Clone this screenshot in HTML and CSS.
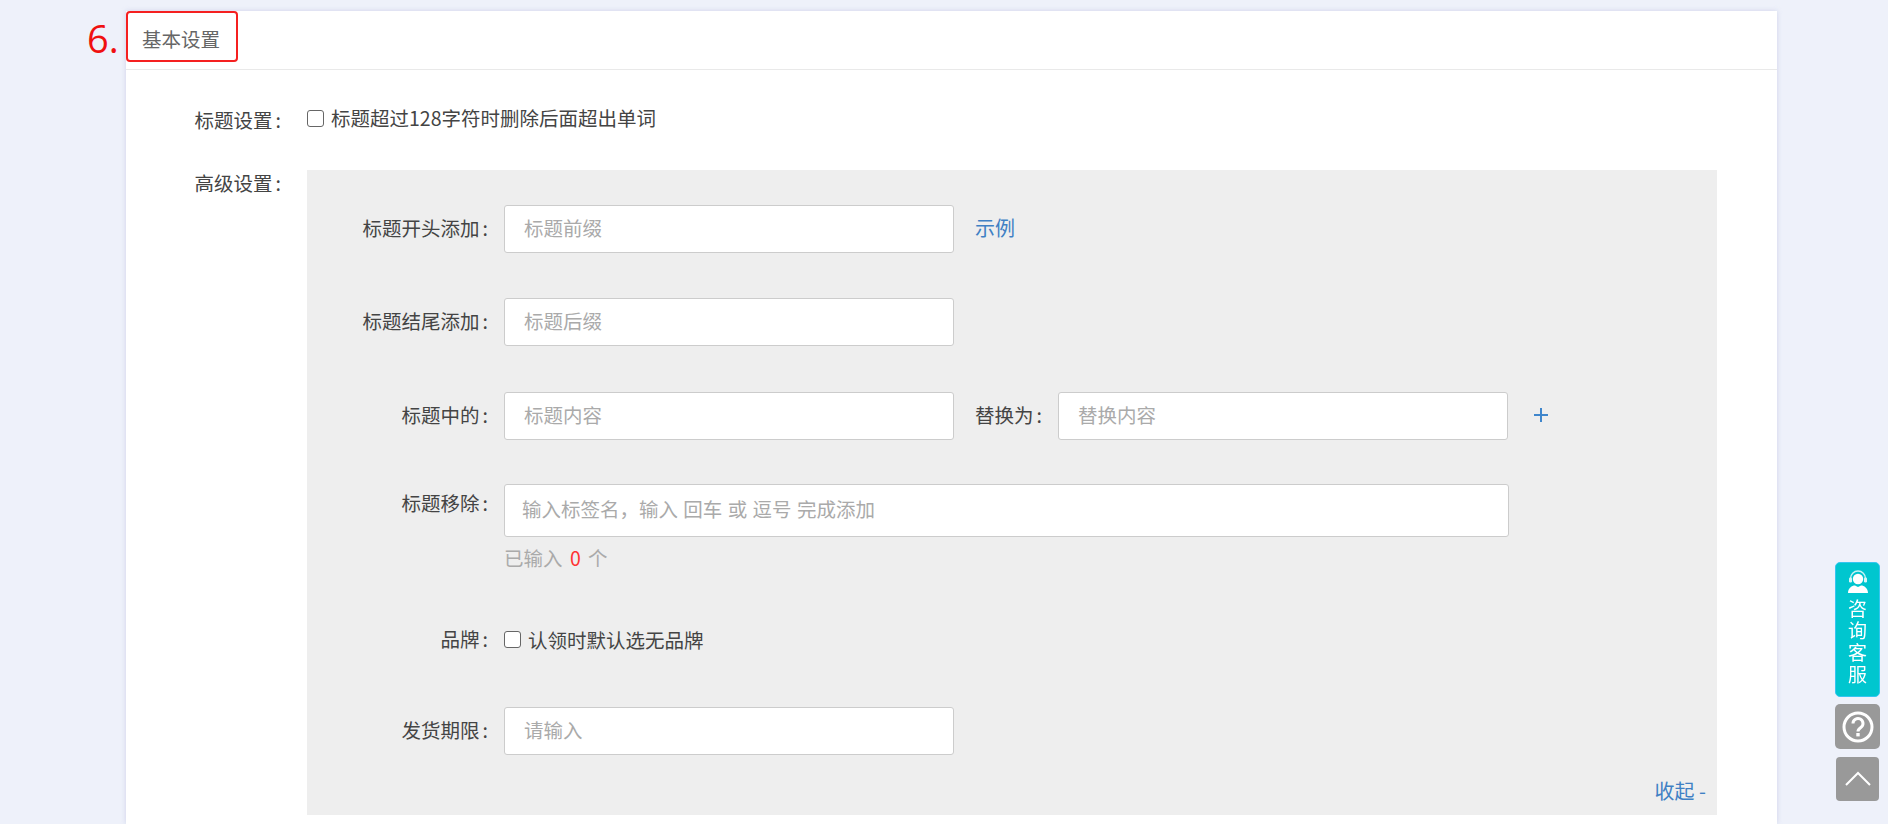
FILE: index.html
```html
<!DOCTYPE html>
<html lang="zh-CN">
<head>
<meta charset="utf-8">
<title>基本设置</title>
<link rel="stylesheet" href="styles.css">
</head>
<body>
<main class="card">
  <span class="step-no">6.</span>
  <header class="card-head"><h2 class="card-title">基本设置</h2><span class="mark"></span></header>
  <section class="card-body">
    <div class="row row-title">
      <label class="label">标题设置<span class="colon">:</span></label>
      <label class="check check-title"><span class="box"></span>标题超过128字符时删除后面超出单词</label>
    </div>
    <div class="row row-adv">
      <label class="label">高级设置<span class="colon">:</span></label>
      <div class="panel">
        <div class="p-row p-first">
          <label class="p-label">标题开头添加<span class="colon">:</span></label>
          <div class="input"><span class="ph">标题前缀</span></div>
          <a class="link demo">示例</a>
        </div>
        <div class="p-row p-second">
          <label class="p-label">标题结尾添加<span class="colon">:</span></label>
          <div class="input"><span class="ph">标题后缀</span></div>
        </div>
        <div class="p-row p-third">
          <label class="p-label">标题中的<span class="colon">:</span></label>
          <div class="input"><span class="ph">标题内容</span></div>
          <label class="mid-label">替换为<span class="colon">:</span></label>
          <div class="input"><span class="ph">替换内容</span></div>
          <svg class="plus" viewBox="0 0 16 16" width="16" height="16" aria-label="添加"><path d="M8 1v14M1 8h14" stroke="#3f86cc" stroke-width="2" fill="none"/></svg>
        </div>
        <div class="p-row p-tags">
          <label class="p-label">标题移除<span class="colon">:</span></label>
          <div class="tag-col">
            <div class="input input-wide"><span class="ph">输入标签名，输入 回车 或 逗号 完成添加</span></div>
            <p class="count">已输入 <em>0</em> 个</p>
          </div>
        </div>
        <div class="p-row p-brand">
          <label class="p-label">品牌<span class="colon">:</span></label>
          <label class="check check-brand"><span class="box"></span>认领时默认选无品牌</label>
        </div>
        <div class="p-row p-ship">
          <label class="p-label">发货期限<span class="colon">:</span></label>
          <div class="input"><span class="ph">请输入</span></div>
        </div>
        <div class="p-foot"><a class="link">收起 -</a></div>
      </div>
    </div>
  </section>
</main>
<aside class="side">
  <div class="side-chat">
    <svg viewBox="0 0 24 24" width="24" height="24"><path d="M4.5 10V8.5a7.5 7.5 0 0 1 15 0V10" fill="none" stroke="#c9f2f4" stroke-width="1.4"/><rect x="3" y="7.5" width="3" height="5" rx="1.2" fill="#d8f6f7"/><rect x="18" y="7.5" width="3" height="5" rx="1.2" fill="#d8f6f7"/><circle cx="12" cy="9" r="5.2" fill="#fff"/><path d="M2 23c0-5 4-7.500 7-7.500l3 1.500 3-1.500c3 0 7 2.500 7 7.500z" fill="#fff"/></svg>
    <span class="side-text">咨询客服</span>
  </div>
  <div class="side-help">
    <svg viewBox="0 0 32 32" width="32" height="32"><circle cx="16" cy="16" r="14" fill="none" stroke="#fff" stroke-width="3"/><path d="M11 12.500a5 5 0 1 1 7.800 4.100c-1.800 1.200-2.800 2-2.800 4" fill="none" stroke="#fff" stroke-width="3"/><rect x="14.300" y="22" width="3.400" height="3.400" fill="#fff"/></svg>
  </div>
  <div class="side-top">
    <svg viewBox="0 0 26 16" width="26" height="16"><path d="M1 14L13 2l12 12" fill="none" stroke="#fff" stroke-width="2"/></svg>
  </div>
</aside>
</body>
</html>
```
FILE: styles.css
```css
* { box-sizing: border-box; }
html, body { height: 100%; }
body {
  margin: 0;
  overflow: hidden;
  background: #eef1fa;
  font-family: "Noto Sans CJK SC", "Liberation Sans", sans-serif;
  font-size: 19.5px;
  color: #444;
  padding: 11px 111px 0 126px;
}
.card {
  position: relative;
  background: #fff;
  box-shadow: 0 0 5px rgba(170, 175, 215, .45);
  height: 813px;
}
.step-no {
  position: absolute;
  left: -39px;
  top: 2px;
  font-size: 38px;
  line-height: 50px;
  color: #f01010;
  font-family: "Open Sans", sans-serif;
}
.card-head {
  position: relative;
  height: 59px;
  border-bottom: 1px solid #e9e9e9;
  padding: 0 0 4px 16px;
  display: flex;
  align-items: center;
}
.card-title {
  margin: 0;
  font-size: 19.5px;
  font-weight: 400;
  color: #666;
}
.mark {
  position: absolute;
  left: 0;
  top: 0;
  width: 112px;
  height: 51px;
  border: 2px solid #f52020;
  border-radius: 4px;
}
.card-body { padding-top: 34px; }
.row { display: flex; }
.row-adv { margin-top: 35px; }
.colon { margin-left: 3px; }
.label {
  width: 155px;
  text-align: right;
  line-height: 28px;
  margin-right: 26px;
  margin-top: 2px;
  flex: none;
}
.row-adv .label { margin-top: -1px; }
.check { display: flex; align-items: center; line-height: 28px; padding-bottom: 1px; }
.check-title { padding-bottom: 3px; }
.box {
  width: 17px;
  height: 17px;
  border: 1px solid #666;
  border-radius: 3px;
  background: #fff;
  margin-right: 7px;
  flex: none;
}
.panel {
  width: 1410px;
  height: 645px;
  background: #eee;
  position: relative;
}
.p-row { display: flex; align-items: center; }
.p-first { padding-top: 35px; }
.p-second { margin-top: 45px; }
.p-third { margin-top: 46px; }
.p-tags { margin-top: 44px; align-items: flex-start; }
.p-brand { margin-top: 51px; height: 34px; }
.p-ship { margin-top: 50px; }
.p-label {
  width: 181px;
  text-align: right;
  margin-right: 16px;
  flex: none;
  line-height: 28px;
  padding-bottom: 3px;
}
.p-tags .p-label { padding: 5px 0 0; }
.input {
  width: 450px;
  height: 48px;
  flex: none;
  background: #fff;
  border: 1px solid #ccc;
  border-radius: 3px;
  padding: 0 0 4px 19px;
  display: flex;
  align-items: center;
}
.input-wide { width: 1005px; height: 53px; padding-left: 17px; word-spacing: 1px; }
.ph { color: #aaa; }
.link { color: #3f80c4; font-size: 20px; }
.demo { margin: 0 0 4px 21px; }
.mid-label { margin: 0 17px 3px 21px; width: 66px; flex: none; white-space: nowrap; }
.plus { margin-left: 25px; margin-top: -3px; }
.tag-col { display: flex; flex-direction: column; }
.count { margin: 7px 0 0; color: #aaa; line-height: 28px; }
.count em { font-style: normal; color: #f33; margin: 0 3px; }
.p-foot {
  position: absolute;
  right: 11px;
  bottom: 9px;
  line-height: 30px;
}
.side {
  position: fixed;
  left: 1835px;
  top: 562px;
  width: 45px;
  display: flex;
  flex-direction: column;
  align-items: center;
}
.side-chat {
  width: 45px;
  height: 135px;
  background: #00c6cf;
  border-radius: 5px;
  border: 1px solid #35c5f0;
  color: #fff;
  display: flex;
  flex-direction: column;
  align-items: center;
  padding-top: 7px;
}
.side-text {
  width: 19px;
  font-size: 19px;
  line-height: 22px;
  margin-top: 3px;
  text-align: center;
}
.side-help {
  width: 45px;
  height: 45px;
  margin-top: 7px;
  background: #999;
  border-radius: 5px;
  display: flex;
  align-items: center;
  justify-content: center;
}
.side-top {
  width: 43px;
  height: 44px;
  margin-top: 8px;
  background: #999;
  border-radius: 4px;
  display: flex;
  align-items: center;
  justify-content: center;
}
```
